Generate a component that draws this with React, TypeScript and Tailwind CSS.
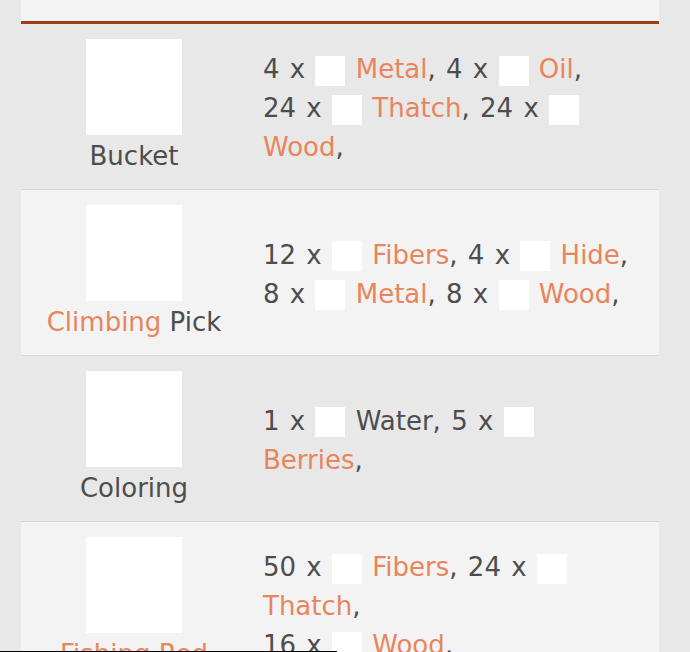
import React from "react";

type Part = { n: string; name: string; link: boolean; br?: boolean };

const rows: { label: React.ReactNode; parts: Part[]; bg: string }[] = [
  {
    label: <span>Bucket</span>,
    bg: "bg-[#e8e8e8]",
    parts: [
      { n: "4", name: "Metal", link: true },
      { n: "4", name: "Oil", link: true },
      { n: "24", name: "Thatch", link: true },
      { n: "24", name: "Wood", link: true },
    ],
  },
  {
    label: (
      <span>
        <span className="text-[#e8855c]">Climbing</span> Pick
      </span>
    ),
    bg: "bg-[#f3f3f3]",
    parts: [
      { n: "12", name: "Fibers", link: true },
      { n: "4", name: "Hide", link: true },
      { n: "8", name: "Metal", link: true },
      { n: "8", name: "Wood", link: true },
    ],
  },
  {
    label: <span>Coloring</span>,
    bg: "bg-[#e8e8e8]",
    parts: [
      { n: "1", name: "Water", link: false },
      { n: "5", name: "Berries", link: true },
    ],
  },
  {
    label: <span className="text-[#e8855c]">Fishing Rod</span>,
    bg: "bg-[#f3f3f3]",
    parts: [
      { n: "50", name: "Fibers", link: true },
      { n: "24", name: "Thatch", link: true, br: true },
      { n: "16", name: "Wood", link: true },
    ],
  },
];

function Ingredients({ parts }: { parts: Part[] }) {
  return (
    <div className="[word-spacing:2px]">
      {parts.map((p, i) => (
        <React.Fragment key={i}>
          {p.n}
          {"\u00a0x "}
          <span className="inline-block w-[30px] h-[30px] bg-white align-middle" />{" "}
          {p.link ? <span className="text-[#e8855c]">{p.name}</span> : <span>{p.name}</span>}
          {","}
          {p.br ? <br /> : i < parts.length - 1 ? " " : ""}
        </React.Fragment>
      ))}
    </div>
  );
}

export default function App() {
  return (
    <div
      className="relative h-[652px] w-[690px] overflow-hidden bg-[#e8e8e8] text-[#4d4d4d] text-[26px] leading-[39px]"
      style={{ fontFamily: '"DejaVu Sans", Verdana, sans-serif' }}
    >
      <div className="ml-[21px] w-[638px]">
        <div className="h-[24px] bg-[#f3f3f3] border-b-[3px] border-[#9c3a16]" />
        {rows.map((r, i) => (
          <div
            key={i}
            className={`grid grid-cols-[226px_1fr] border-b border-[#d5d5d5] ${r.bg}`}
          >
            <div className="flex flex-col items-center pt-[15px] pb-[13px]">
              <div className="w-[96px] h-[96px] bg-white" />
              <div className="mt-[2px] whitespace-nowrap">{r.label}</div>
            </div>
            <div className="flex items-center pl-[16px] pr-[20px] pt-[19px] pb-[15px]">
              <Ingredients parts={r.parts} />
            </div>
          </div>
        ))}
      </div>
      <div className="absolute left-0 bottom-0 h-px w-[337px] bg-black" />
    </div>
  );
}
